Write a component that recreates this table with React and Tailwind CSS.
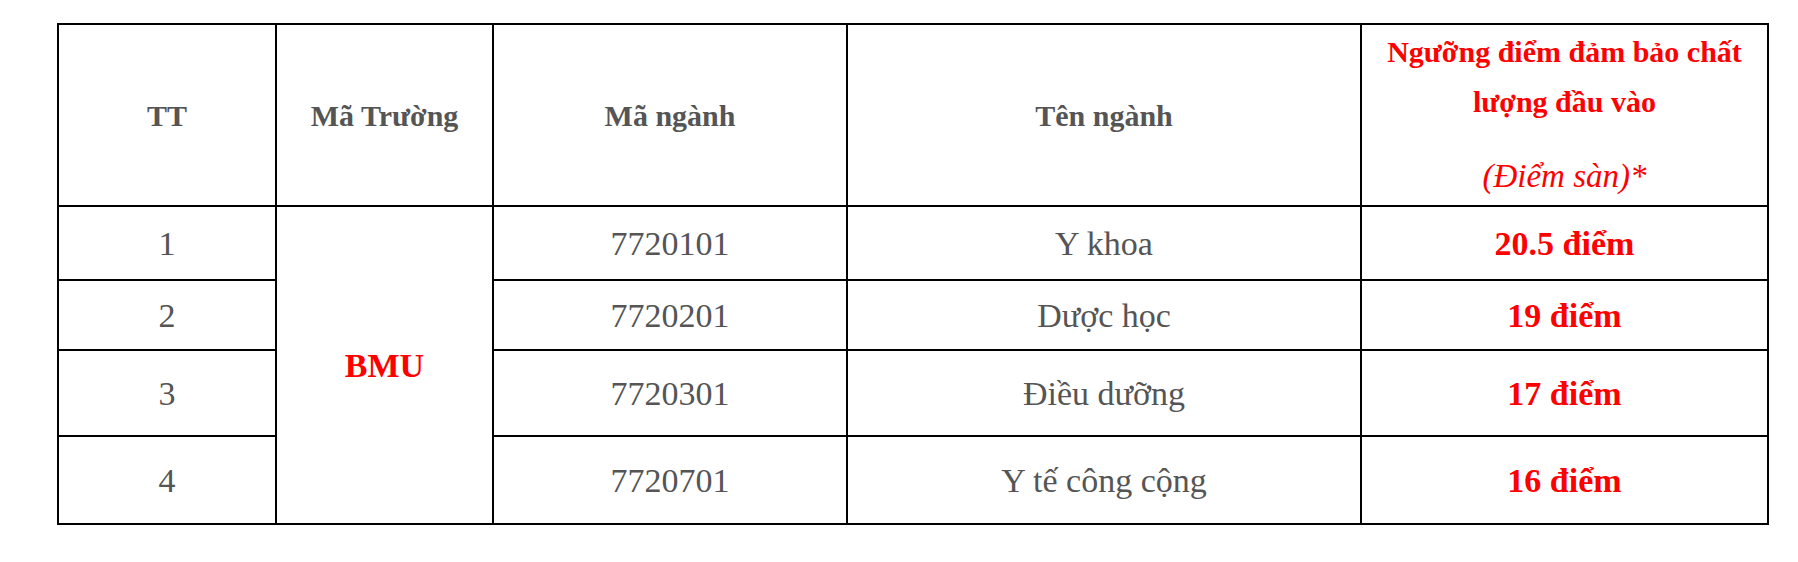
import React from 'react'

const rows = [
  { tt: '1', code: '7720101', name: 'Y khoa', score: '20.5 điểm', h: 'h-[74px]' },
  { tt: '2', code: '7720201', name: 'Dược học', score: '19 điểm', h: 'h-[70px]' },
  { tt: '3', code: '7720301', name: 'Điều dưỡng', score: '17 điểm', h: 'h-[86px]' },
  { tt: '4', code: '7720701', name: 'Y tế công cộng', score: '16 điểm', h: 'h-[88px]' },
]

function App() {
  const cell = 'border-2 border-black text-center align-middle p-0'

  return (
    <div className="w-full min-h-screen bg-white pt-[23px] pl-[57px] font-['Liberation_Serif',serif]">
      <table className="table-fixed border-collapse w-[1712px] border-2 border-[#1c1c1c]">
        <colgroup>
          <col className="w-[218px]" />
          <col className="w-[217px]" />
          <col className="w-[354px]" />
          <col className="w-[514px]" />
          <col className="w-[407px]" />
        </colgroup>
        <thead>
          <tr className="h-[182px]">
            <th className={`${cell} text-[30px] font-bold text-[#555555]`}>TT</th>
            <th className={`${cell} text-[30px] font-bold text-[#555555]`}>Mã Trường</th>
            <th className={`${cell} text-[30px] font-bold text-[#555555]`}>Mã ngành</th>
            <th className={`${cell} text-[30px] font-bold text-[#555555]`}>Tên ngành</th>
            <th className={`${cell} text-[#ff0000]`}>
              <p className="text-[30px] font-bold leading-[50px] px-5">
                Ngưỡng điểm đảm bảo chất lượng đầu vào
              </p>
              <p className="text-[33px] italic font-normal leading-[50px] mt-[24px] mb-[2px]">
                (Điểm sàn)*
              </p>
            </th>
          </tr>
        </thead>
        <tbody>
          {rows.map((r, i) => (
            <tr key={r.tt} className={r.h}>
              <td className={`${cell} text-[34px] text-[#555555]`}>{r.tt}</td>
              {i === 0 && (
                <td rowSpan={4} className={`${cell} text-[34px] font-bold text-[#ff0000]`}>
                  BMU
                </td>
              )}
              <td className={`${cell} text-[34px] text-[#555555]`}>{r.code}</td>
              <td className={`${cell} text-[34px] text-[#555555]`}>{r.name}</td>
              <td className={`${cell} text-[34px] font-bold text-[#ff0000]`}>{r.score}</td>
            </tr>
          ))}
        </tbody>
      </table>
    </div>
  )
}

export default App
